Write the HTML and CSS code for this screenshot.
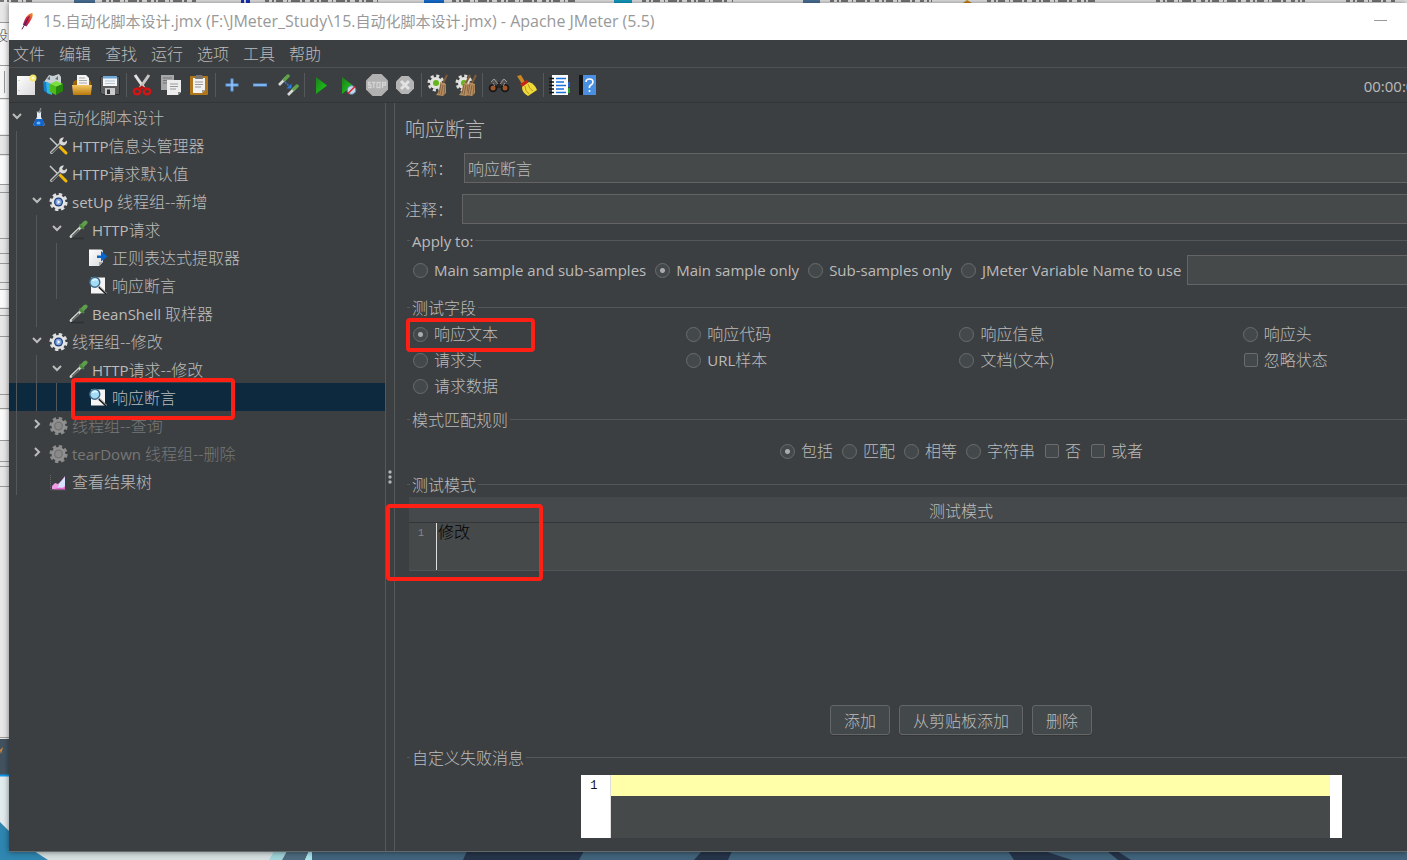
FILE: index.html
```html
<!DOCTYPE html>
<html lang="zh-CN">
<head>
<meta charset="utf-8">
<title>15.自动化脚本设计.jmx - Apache JMeter (5.5)</title>
<link rel="stylesheet" href="styles.css">
</head>
<body>
<svg class="defs" aria-hidden="true">
  <defs>
    <linearGradient id="gold" x1="0" y1="0" x2="0" y2="1"><stop offset="0" stop-color="#f3c864"/><stop offset="1" stop-color="#b9780c"/></linearGradient>
    <linearGradient id="green" x1="0" y1="0" x2="1" y2="1"><stop offset="0" stop-color="#1f7d1c"/><stop offset="1" stop-color="#18d416"/></linearGradient>
    <linearGradient id="paper" x1="0" y1="0" x2="1" y2="1"><stop offset="0" stop-color="#ffffff"/><stop offset="1" stop-color="#d9d9d9"/></linearGradient>
    <linearGradient id="quill" x1="0" y1="1" x2="1" y2="0"><stop offset="0" stop-color="#6b2a7a"/><stop offset=".5" stop-color="#d5223c"/><stop offset="1" stop-color="#f5a623"/></linearGradient>
  </defs>
  <symbol id="chev-down" viewBox="0 0 12 12"><path d="M2 4l4 4 4-4" fill="none" stroke="#bbb" stroke-width="2"/></symbol>
  <symbol id="chev-right" viewBox="0 0 12 12"><path d="M4 2l4 4-4 4" fill="none" stroke="#bbb" stroke-width="2"/></symbol>
  <symbol id="flask" viewBox="0 0 20 20"><path d="M8 4v5L4.500 16q0 2 1.500 2h8q1.500 0 1.500-2L12 9V4z" fill="#e4ecf4"/><path d="M6.500 11h7l2 5q0 2-1.500 2H6q-1.500 0-1.500-2z" fill="#1264c8"/><path d="M10 5l2-5" stroke="#8a9199" stroke-width="1.200"/><ellipse cx="9.500" cy="15" rx="2" ry="1.500" fill="#6fb4f5"/><path d="M7.500 4h5" stroke="#9aa5b0"/></symbol>
  <symbol id="tools" viewBox="0 0 20 20"><path d="M1 2l9 9" stroke="#c9c9c9" stroke-width="1.500"/><path d="M11 11l6 6" stroke="#f2b705" stroke-width="3" stroke-linecap="round"/><path d="M12 7L2.500 16.500" stroke="#c4c4c4" stroke-width="3" stroke-linecap="round"/><path d="M12 8L2.500 17" stroke="#4c4e4e" stroke-width="1.200"/><path d="M15 1.500a4 4 0 1 0 3 3l-3 2-2-1.500z" fill="#dadada"/></symbol>
  <symbol id="gear" viewBox="0 0 20 20"><circle cx="9.500" cy="10" r="7.600" fill="none" stroke="#dedede" stroke-width="3" stroke-dasharray="3.400 2.569"/><circle cx="9.500" cy="10" r="7" fill="#e4e4e4"/><circle cx="9.500" cy="10" r="4.500" fill="#1d3f7c"/><circle cx="9.500" cy="10" r="3.200" fill="#7da0d6"/><path d="M8.500 8l3 2-3 2z" fill="#f4f8ff"/></symbol>
  <symbol id="gear-off" viewBox="0 0 20 20"><circle cx="9.500" cy="10" r="7.600" fill="none" stroke="#8c8c8c" stroke-width="3" stroke-dasharray="3.400 2.569"/><circle cx="9.500" cy="10" r="7" fill="#909090"/><circle cx="9.500" cy="10" r="4.500" fill="#737373"/><circle cx="9.500" cy="10" r="3.200" fill="#898989"/></symbol>
  <symbol id="dropper" viewBox="0 0 20 20"><path d="M2 18.500h13" stroke="#2e3132" stroke-width="1.500"/><path d="M12 7L2 16.500" stroke="#d5d9d5" stroke-width="2.800" stroke-linecap="round"/><path d="M10 9.500L3 16.500" stroke="#585d58" stroke-width="1.200"/><path d="M12.500 6.500l4-4" stroke="#5e9f4b" stroke-width="4" stroke-linecap="round"/><path d="M10.500 4.500l4.500 4.500" stroke="#4f873e" stroke-width="2"/></symbol>
  <symbol id="extract" viewBox="0 0 20 20"><path d="M0 1.500h12q2 0 2 2V14l-4 4H0z" fill="url(#paper)"/><path d="M10 18v-4h4" fill="#aaa"/><path d="M8 7.500h4V3l6.500 5.500-6.500 5V10H8z" fill="#0b66cc"/></symbol>
  <symbol id="lens" viewBox="0 0 20 20"><path d="M2 1.500h14v16H2z" fill="#f4f4f4"/><path d="M10 11l7.500 7" stroke="#1b1b1b" stroke-width="2.200"/><path d="M11 11l7 6.500" stroke="#ccc" stroke-width=".8"/><circle cx="5.800" cy="6.200" r="5" fill="#a5dcf5" stroke="#3e6987" stroke-width="1.400"/><path d="M3.500 5q2-2.500 5-1" stroke="#e8f8ff" fill="none" stroke-width="1.500"/></symbol>
  <symbol id="graph" viewBox="0 0 20 20"><path d="M1.500 3v15H17" stroke="#666" stroke-dasharray="1 1" fill="none"/><path d="M3 17v-3l3-3 3 1 3-3 4-5v13z" fill="#f29be6"/><path d="M9 16l1-4 6-7v9l-4 2z" fill="#d5e5ff"/><path d="M3 17.500h13v-3l-2 2-3-1-4 1z" fill="#e766d0"/></symbol>
  <symbol id="broom" viewBox="0 0 22 22"><path d="M20 1l-4 8" stroke="#7f5c37" stroke-width="2"/><path d="M13 8l6 2v9l-3 3-7-1q4-4 4-13z" fill="#b78e60"/><path d="M14 10l-2 10M16 11l-2 10M18 11l-1 10" stroke="#80603e" stroke-width=".9"/></symbol>
  <symbol id="gearmini" viewBox="0 0 22 22"><circle cx="9" cy="9" r="7" fill="none" stroke="#ddd" stroke-width="3" stroke-dasharray="3 2.500"/><circle cx="9" cy="9" r="6" fill="#e4e4df"/><circle cx="9" cy="9" r="3" fill="#62b51c"/></symbol>
</svg>

<svg class="desktop" viewBox="0 0 1407 860" preserveAspectRatio="none" aria-hidden="true">
  <rect width="1407" height="860" fill="#e8e8e8"/>
  <path d="M74 0h21v3H74zM803 0h17v3h-17z" fill="#4d759c"/>
  <path d="M241 0h3v3h-3zM246 0h4v3h-4z" fill="#1b35c6"/>
  <path d="M424 0h20v3h-20z" fill="#1573d8"/><path d="M614 0h18v3h-18z" fill="#14a0c8"/><path d="M963 3l4-3 5 3z" fill="#d68a16"/>
  <path d="M0 1h32M102 1h94M265 1h114M452 1h123M642 1h91M830 1h102M987 1h110M1156 1h149M1346 1h51" stroke="#777" stroke-width="2" stroke-dasharray="4 3 2 2 7 4 1 3 9 2 3 5"/>
  <path d="M0 22h9v76H0z" fill="#f7f7f7"/>
  <path d="M0 22.500h9M0 65.500h9M0 98.500h9M0 135.500h9M0 154.500h9M0 184.500h9M0 192.500h9M0 238.500h9M0 253.500h9M0 263.500h9M0 282.500h9M0 289.500h9M0 308.500h9M0 315.500h9M0 336.500h9M0 394.500h9M0 408.500h9M0 440.500h9M0 461.500h9M0 466.500h9M0 486.500h9M0 737.500h9" stroke="#9a9a9a"/>
  <path d="M0 100h9v34H0zM0 156h9v28H0zM0 290h9v17H0zM0 410h9v30H0z" fill="#fbfbfb"/>
  <path d="M4.500 71v22" stroke="#999"/>
  <path d="M0 739h9v37H0z" fill="#43525f"/><path d="M0 750l3-3-2 7z" fill="#e38a2b"/><path d="M0 775.500h9" stroke="#0d99ef" stroke-width="2"/>
  <path d="M0 777h9v83H0z" fill="#e2ecef"/><path d="M0 822l9 9 40 29H0z" fill="#2f86b0"/>
  <path d="M48 860l-14-9h240l-5 9z" fill="#d5dfe0"/><path d="M269 860l5-9h13l-5 9z" fill="#a0d5da"/><path d="M282 860l5-9h22l-4 9z" fill="#4d6b7e"/>
  <path d="M305 860l4-9h5l-2 9z" fill="#a9e4ea"/><path d="M312 851h1095v9H312z" fill="#41647c"/>
  <path d="M467 851h117l-5 9H463zM702 851h30l-4 9h-34zM1008 851h36l28 9h-58zM1107 851h10l14 9h-13z" fill="#263449"/>
</svg>
<span class="desktop-word" aria-hidden="true">设</span>

<div class="window">
  <header class="titlebar">
    <svg class="feather" viewBox="0 0 14 20"><path d="M2 14Q5 3 12 1q2 3-2 9l-4 6z" fill="url(#quill)"/><path d="M1 19L9 5" stroke="#4a1750" stroke-width="1"/></svg>
    <h1 class="title"><em>15.</em>自动化脚本设计<em>.jmx (F:\JMeter_Study\15.</em>自动化脚本设计<em>.jmx) - Apache JMeter (5.5)</em></h1>
    <button class="minimize" aria-label="最小化"></button>
  </header>

  <nav class="menubar">
    <button>文件</button><button>编辑</button><button>查找</button><button>运行</button><button>选项</button><button>工具</button><button>帮助</button>
  </nav>

  <div class="toolbar">
    <button aria-label="新建"><svg viewBox="0 0 22 22"><path d="M2 2h18v19H2z" fill="url(#paper)"/><path d="M4 6v1M4 16v1" stroke="#aaa" stroke-width="1"/><circle cx="18" cy="4" r="3.500" fill="#f6e46c"/><circle cx="18" cy="4" r="1.500" fill="#fffbd0"/></svg></button>
    <button aria-label="模板"><svg viewBox="0 0 22 22"><path d="M1 8l5-7 4 1 6-2 2 3v7H1z" fill="#c9d0d4"/><path d="M4 5l3-3v4zM12 5l3-3v4z" fill="#5f7380"/><path d="M0 7l6 2v11l-5-3z" fill="#1580c8"/><path d="M3 8l6 2v11l-5-2z" fill="#33b3df"/><path d="M7 10l6-3 7 3-7 3z" fill="#7be03e"/><path d="M7 10l6 3v8l-6-3z" fill="#4dbb18"/><path d="M13 13l7-3v7l-7 4z" fill="#24860d"/></svg></button>
    <button aria-label="打开"><svg viewBox="0 0 22 22"><path d="M2 8l3-2h14l1 3v12H3z" fill="#9c6206"/><path d="M6 1h9l3 3v8H6z" fill="#f4f4f4"/><path d="M8 4h6M8 6.500h8M8 9h8" stroke="#aaa"/><path d="M1 11h20l-1 9q0 1-1 1H3q-1 0-1-1z" fill="url(#gold)"/></svg></button>
    <button aria-label="保存"><svg viewBox="0 0 22 22"><path d="M1.500 2.500h19v18h-17l-2-2z" fill="#5b5d5f" stroke="#2b2c2d"/><path d="M4 2h14v10H4z" fill="#f3f6f8"/><path d="M4 2h14v2.500H4z" fill="#6fa9d8"/><path d="M6 7h10M6 9.500h10" stroke="#b9c4cc"/><path d="M6 14h10v7H6z" fill="#c9cbcd"/><path d="M8 15.500h3V20H8z" fill="#333"/></svg></button>
    <i class="sep"></i>
    <button aria-label="剪切"><svg viewBox="0 0 22 22"><path d="M3 1l9 13" stroke="#e2e2e2" stroke-width="3"/><path d="M17 1L8 14" stroke="#c4c4c4" stroke-width="3"/><ellipse cx="5" cy="17.500" rx="3.200" ry="2.800" fill="none" stroke="#d31414" stroke-width="2.400"/><ellipse cx="15" cy="17.500" rx="3.200" ry="2.800" fill="none" stroke="#d31414" stroke-width="2.400"/><path d="M7 15l3-2 3 2" stroke="#b80f0f" stroke-width="2.500" fill="none"/></svg></button>
    <button aria-label="复制"><svg viewBox="0 0 22 22"><path d="M1 1h13v15H1z" fill="#a5a7a8"/><path d="M3 4h9M3 6.500h9M3 9h5" stroke="#777"/><path d="M7 6h14v12l-3 3H7z" fill="#ededed"/><path d="M10 10h8M10 12.500h8M10 15h6" stroke="#999"/><path d="M18 21v-3h3" fill="#888"/></svg></button>
    <button aria-label="粘贴"><svg viewBox="0 0 22 22"><rect x="2" y="2" width="18" height="19" rx="1" fill="#b1761a"/><path d="M5 4h12v12l-3 3H5z" fill="#f1f1f1"/><path d="M8 1h6l1 4H7z" fill="#777"/><path d="M7 8h8M7 10.500h8M7 13h6" stroke="#999"/><path d="M14 19v-3h3" fill="#999"/></svg></button>
    <i class="sep"></i>
    <button aria-label="展开"><svg viewBox="0 0 22 22"><path d="M11 4.500v13M4.500 11h13" stroke="#5a9be6" stroke-width="3"/><path d="M11 5.500v11M5.500 11h11" stroke="#a7cbf5" stroke-width="1"/></svg></button>
    <button aria-label="折叠"><svg viewBox="0 0 22 22"><path d="M4 11h14" stroke="#5a9be6" stroke-width="3"/><path d="M5 11h12" stroke="#a7cbf5" stroke-width="1"/></svg></button>
    <button aria-label="切换"><svg viewBox="0 0 22 22"><path d="M9 4l-7 7" stroke="#d6d9d6" stroke-width="2.600"/><path d="M7.500 5.500L11 2" stroke="#5fa34b" stroke-width="3.500" stroke-linecap="round"/><path d="M18 14l-7 7" stroke="#d6d9d6" stroke-width="2.600"/><path d="M17 15L20 12" stroke="#5fa34b" stroke-width="3.500" stroke-linecap="round"/><path d="M8 8l5 5" stroke="#2b7be0" stroke-width="1.500" stroke-dasharray="2 1"/><path d="M14.500 9.500v5h-5z" fill="#2b7be0"/></svg></button>
    <i class="sep"></i>
    <button aria-label="启动"><svg viewBox="0 0 22 22"><path d="M6 3l11 8.500-11 8.500z" fill="url(#green)"/></svg></button>
    <button aria-label="不停顿开始"><svg viewBox="0 0 22 22"><path d="M4 3l11 8.500-11 8.500z" fill="url(#green)"/><circle cx="13.500" cy="16" r="4.300" fill="#c3d8ec" stroke="#5f87ad"/><path d="M10 19.500l7-7" stroke="#d22" stroke-width="1.500"/></svg></button>
    <button aria-label="停止" disabled><svg viewBox="0 0 22 22"><path d="M6.500 0h9L22 6.500v9L15.500 22h-9L0 15.500v-9z" fill="#b1b1b1"/><path d="M5 8.500H2.500V11H5v2.500H2M6 8.500h3.500M7.800 8.500v5.500M11 8.500h3v5h-3zM16.500 14V8.500h3V11h-3" fill="none" stroke="#d4d4d4" stroke-width="1.300"/></svg></button>
    <button aria-label="关闭" disabled><svg viewBox="0 0 22 22"><path d="M7.500 2h7l5.500 5.500v7L14.500 20h-7L2 14.500v-7z" fill="#b4b4b4"/><path d="M7 7l8 8M15 7l-8 8" stroke="#e2e2e2" stroke-width="3"/></svg></button>
    <i class="sep"></i>
    <button aria-label="清除"><svg viewBox="0 0 22 22"><use href="#gearmini"/><use href="#broom"/></svg></button>
    <button aria-label="清除全部"><svg viewBox="0 0 22 22"><use href="#gearmini"/><use href="#broom" x="-5"/><use href="#broom" x="1"/></svg></button>
    <i class="sep"></i>
    <button aria-label="查找"><svg viewBox="0 0 22 22"><path d="M4 6q2-3 5 0l1 5H2zM18 6q-2-3-5 0l-1 5h8z" fill="#515151"/><path d="M9 8h4v6H9z" fill="#262626"/><circle cx="5" cy="14" r="4.300" fill="#171717"/><circle cx="17" cy="14" r="4.300" fill="#171717"/><circle cx="5" cy="14" r="2.500" fill="#a1572c"/><circle cx="17" cy="14" r="2.500" fill="#a1572c"/><path d="M3 8l3-3 4 5M19 8l-3-3-4 5M5 9l2 3M17 9l-2 3" stroke="#999" fill="none"/></svg></button>
    <button aria-label="重置查找"><svg viewBox="0 0 22 22"><path d="M1 2l4-1 4 7-3 2z" fill="#c98622"/><path d="M4 10l7-4 2 3-7 4z" fill="#c3231b"/><path d="M6 13l7-5q6 2 8 8l-9 6q-6-3-6-9z" fill="#f0d83a"/><path d="M9 12q0 5 4 8M12 10q1 5 5 7" stroke="#b79a14" fill="none"/></svg></button>
    <i class="sep"></i>
    <button aria-label="函数助手"><svg viewBox="0 0 22 22"><path d="M3 1h16v20H3z" fill="#fff"/><path d="M19 8h2v5h-2z" fill="#1f62c9"/><path d="M19 14h2v5h-2z" fill="#27a52a"/><path d="M7 4.500h10M7 8h8M7 11.500h10M7 15h8M7 18.500h10" stroke="#1a6fd8" stroke-width="1.300"/><path d="M0 4.500h5M0 8h5M0 11.500h5M0 15h5M0 18.500h5" stroke="#111" stroke-width="1.500"/></svg></button>
    <button aria-label="帮助"><svg viewBox="0 0 22 22"><path d="M2 1h17v20H2z" fill="#4a8fe2"/><path d="M2 1h4v20H2z" fill="#151515"/><path d="M9 8q0-3 3.500-3T16 8q0 2-2 3t-1.500 3M12.500 16v2" fill="none" stroke="#fff" stroke-width="1.600"/></svg></button>
    <span class="timer">00:00:00</span>
  </div>

  <div class="body">
    <aside class="tree">
      <ul>
        <li><svg class="arrow"><use href="#chev-down"/></svg><svg class="node"><use href="#flask"/></svg><span>自动化脚本设计</span></li>
        <li><i></i><b></b><svg class="node"><use href="#tools"/></svg><span><em>HTTP</em>信息头管理器</span></li>
        <li><i></i><b></b><svg class="node"><use href="#tools"/></svg><span><em>HTTP</em>请求默认值</span></li>
        <li><i></i><svg class="arrow"><use href="#chev-down"/></svg><svg class="node"><use href="#gear"/></svg><span><em>setUp </em>线程组--新增</span></li>
        <li><i></i><i></i><svg class="arrow"><use href="#chev-down"/></svg><svg class="node"><use href="#dropper"/></svg><span><em>HTTP</em>请求</span></li>
        <li><i></i><i></i><i></i><b></b><svg class="node"><use href="#extract"/></svg><span>正则表达式提取器</span></li>
        <li><i></i><i></i><i></i><b></b><svg class="node"><use href="#lens"/></svg><span>响应断言</span></li>
        <li><i></i><i></i><b></b><svg class="node"><use href="#dropper"/></svg><span><em>BeanShell </em>取样器</span></li>
        <li><i></i><svg class="arrow"><use href="#chev-down"/></svg><svg class="node"><use href="#gear"/></svg><span>线程组--修改</span></li>
        <li><i></i><i></i><svg class="arrow"><use href="#chev-down"/></svg><svg class="node"><use href="#dropper"/></svg><span><em>HTTP</em>请求--修改</span></li>
        <li class="selected"><i></i><i></i><i></i><b></b><svg class="node"><use href="#lens"/></svg><span>响应断言</span></li>
        <li class="off"><i></i><svg class="arrow"><use href="#chev-right"/></svg><svg class="node"><use href="#gear-off"/></svg><span>线程组--查询</span></li>
        <li class="off"><i></i><svg class="arrow"><use href="#chev-right"/></svg><svg class="node"><use href="#gear-off"/></svg><span><em>tearDown </em>线程组--删除</span></li>
        <li><i></i><b></b><svg class="node"><use href="#graph"/></svg><span>查看结果树</span></li>
      </ul>
    </aside>
    <div class="splitter"><svg viewBox="0 0 4 14"><circle cx="2" cy="2" r="1.700"/><circle cx="2" cy="7" r="1.700"/><circle cx="2" cy="12" r="1.700"/></svg></div>

    <main class="viewport">
      <form class="panel">
        <h2>响应断言</h2>
        <div class="row name"><label for="name">名称：</label><input type="text" id="name" value="响应断言"></div>
        <div class="row comment"><label for="comment">注释：</label><input type="text" id="comment"></div>

        <fieldset>
          <legend class="latin">Apply to:</legend>
          <div class="options latin">
            <label><input type="radio" name="scope">Main sample and sub-samples</label>
            <label><input type="radio" name="scope" checked>Main sample only</label>
            <label><input type="radio" name="scope">Sub-samples only</label>
            <label><input type="radio" name="scope">JMeter Variable Name to use</label>
            <input type="text" class="variable" aria-label="JMeter Variable Name">
          </div>
        </fieldset>

        <fieldset>
          <legend>测试字段</legend>
          <div class="fields">
            <label><input type="radio" name="field" checked>响应文本</label>
            <label><input type="radio" name="field">响应代码</label>
            <label><input type="radio" name="field">响应信息</label>
            <label><input type="radio" name="field">响应头</label>
            <label><input type="radio" name="field">请求头</label>
            <label><input type="radio" name="field"><span><em>URL</em>样本</span></label>
            <label><input type="radio" name="field">文档(文本)</label>
            <label><input type="checkbox">忽略状态</label>
            <label><input type="radio" name="field">请求数据</label>
          </div>
        </fieldset>

        <fieldset>
          <legend>模式匹配规则</legend>
          <div class="options rules">
            <label><input type="radio" name="rule" checked>包括</label>
            <label><input type="radio" name="rule">匹配</label>
            <label><input type="radio" name="rule">相等</label>
            <label><input type="radio" name="rule">字符串</label>
            <label><input type="checkbox">否</label>
            <label><input type="checkbox">或者</label>
          </div>
        </fieldset>

        <fieldset class="patterns">
          <legend>测试模式</legend>
          <table>
            <thead><tr><th>测试模式</th></tr></thead>
            <tbody><tr><td><div class="cell"><span class="line">1</span><textarea aria-label="测试模式">修改</textarea></div></td></tr></tbody>
          </table>
          <div class="actions">
            <button type="button">添加</button><button type="button">从剪贴板添加</button><button type="button">删除</button>
          </div>
        </fieldset>

        <fieldset>
          <legend>自定义失败消息</legend>
          <div class="message"><span class="line">1</span><textarea aria-label="自定义失败消息"></textarea></div>
        </fieldset>
      </form>
    </main>
  </div>
</div>

<div class="mark mark-node"></div>
<div class="mark mark-field"></div>
<div class="mark mark-pattern"></div>
</body>
</html>
```

FILE: styles.css
```css
* { box-sizing: border-box; }

:root {
  --bg: #3c3f41;
  --field: #45494a;
  --edge: #646464;
  --rule: #55585a;
  --text: #bbbbbb;
  --ui: "Open Sans", "Noto Sans CJK SC", sans-serif;
  --cjk: "Noto Sans CJK SC", sans-serif;
}

body {
  margin: 0;
  height: 100vh;
  padding: 3px 0 8px 9px;
  overflow: hidden;
  position: relative;
  font: 300 16px/22px var(--cjk);
  color: var(--text);
}

button, input, textarea { font: inherit; color: inherit; }
button { background: none; border: 0; padding: 0; }
em, .latin { font-family: var(--ui); font-size: 15px; font-style: normal; font-weight: 400; }
em { white-space: pre; }

.defs { position: absolute; width: 0; height: 0; }
.desktop { position: absolute; inset: 0; width: 100%; height: 100%; }
.desktop-word { position: absolute; left: -5px; top: 26px; font-size: 13px; line-height: 18px; color: #333; }

.window {
  position: relative;
  height: 100%;
  display: flex;
  flex-direction: column;
  background: var(--bg);
  border-bottom: 1px solid #63686a;
  box-shadow: 0 0 6px rgba(0, 0, 0, .5);
  overflow: hidden;
}

.titlebar { display: flex; align-items: center; height: 37px; padding: 0 20px 2px 12px; background: #fff; flex: none; }
.feather { width: 13px; height: 20px; }
.title { margin: 0 auto 0 9px; font: 400 15px/22px var(--ui); color: #999; white-space: nowrap; }
.title em { font-size: 16px; }
.minimize { width: 13px; height: 20px; background: linear-gradient(#999, #999) center / 13px 1px no-repeat; }

.menubar { display: flex; gap: 14px; align-items: center; height: 28px; padding: 0 4px 2px; border-bottom: 1px solid #515151; flex: none; }

.toolbar { display: flex; align-items: center; height: 35px; padding-left: 3px; border-bottom: 1px solid #323435; flex: none; }
.toolbar button { width: 28px; height: 28px; display: grid; place-items: center; flex: none; }
.toolbar svg { width: 22px; height: 22px; }
.sep { width: 5px; height: 24px; background: linear-gradient(#56595b, #56595b) center / 1px 100% no-repeat; flex: none; }
.timer { margin: 2px -16px 0 auto; font: 400 15px/22px var(--ui); }

.body { display: flex; flex: 1; min-height: 0; }

.tree { width: 377px; flex: none; border-right: 1px solid #55585a; }
.tree ul { list-style: none; margin: 0; padding: 0; }
.tree li { display: flex; align-items: center; height: 28px; white-space: nowrap; }
.tree i, .tree b { width: 20px; align-self: stretch; flex: none; }
.tree i { background: linear-gradient(#55585a, #55585a) 7px 0 / 1px 100% no-repeat; }
.tree .arrow { width: 12px; height: 12px; margin: 0 6px 2px 2px; flex: none; }
.tree .node { width: 20px; height: 20px; margin: 2px 3px 0 0; flex: none; }
.tree .selected { background-color: #0d293e; }
.tree .off span { color: #777; }

.splitter { width: 9px; flex: none; display: grid; place-items: center; border-right: 1px solid #55585a; }
.splitter svg { width: 4px; height: 14px; fill: #b4b4b4; }

.viewport { flex: 1; min-width: 0; overflow: hidden; }
/* The form is wider than its viewport and runs on past the right edge. */
.panel { display: flex; flex-direction: column; height: 100%; margin-right: -114px; padding: 12px 8px 13px 10px; }
.panel h2 { margin: 0 0 10px; font: 300 20px/28px var(--cjk); }

.row { display: flex; align-items: center; margin-bottom: 11px; }
.row label { width: 59px; flex: none; }
.row.comment { margin-bottom: 5px; }
.row.comment label { width: 57px; }
input[type="text"] { flex: 1; min-width: 0; height: 30px; padding: 0 3px; background: var(--field); border: 1px solid var(--edge); border-radius: 0; outline: 0; }

fieldset { min-width: 0; margin: 0 0 0 2px; padding: 0 0 0 3px; border: 0 solid var(--rule); border-top-width: 1px; }
legend { height: 22px; padding: 0 2px; line-height: 22px; }
legend.latin { line-height: 24px; }

label { display: flex; align-items: center; white-space: nowrap; }
input[type="radio"], input[type="checkbox"] { appearance: none; flex: none; width: 15px; height: 15px; margin: 0 6px 0 0; border: 1px solid #6b6b6b; background: #43494a; }
input[type="radio"] { border-radius: 50%; }
input[type="radio"]:checked { background: radial-gradient(circle, #ababab 2px, #43494a 3px); }
input[type="checkbox"] { width: 14px; height: 14px; border-radius: 2px; margin-left: 1px; }

.options { display: flex; align-items: center; height: 30px; gap: 9px; margin: 4px 0 11px 3px; }
.options .variable { margin-left: -3px; }
.fields { display: grid; grid-template-columns: 273fr 273fr 283fr 270fr; grid-auto-rows: 26px; margin: 2px 0 10px 3px; }
.fields input, .rules input { margin-top: 2px !important; }
.rules { justify-content: center; margin: 5px 0 8px; }

.patterns { flex: 1; display: flex; flex-direction: column; padding-left: 2px; }
.patterns legend { margin-left: 1px; }
table { width: 100%; margin-top: 2px; border-collapse: collapse; }
th { height: 25px; padding: 1px 0 0; font-weight: 300; line-height: 22px; background: #45494b; border-bottom: 1px solid #333537; }
td { padding: 0; background: var(--field); border-bottom: 1px solid #515456; }
.cell { display: flex; height: 47px; }
.line { font: 10px/22px "Liberation Mono", monospace; text-align: center; flex: none; }
.cell .line { width: 27px; padding-right: 3px; color: #888; }
textarea { flex: 1; display: block; resize: none; outline: 0; border: 0; margin: 0; }
.cell textarea { padding: 0 1px; line-height: 16px; color: #000; background: none; border-left: 1px solid #ddd; }

.actions { display: flex; justify-content: center; gap: 9px; margin: auto 0 11px; }
.actions button { height: 30px; padding: 0 13px; line-height: 24px; background: #43484a; border: 1px solid #646768; border-radius: 3px; box-shadow: 0 1px 1px #343638; }

.message { display: flex; width: 69%; height: 63px; margin: 7px auto 0; background: var(--field); border-right: 12px solid #fff; }
.message .line { width: 30px; padding-right: 3px; font-size: 12px; color: #111; background: #fff; border-right: 1px solid #ddd; }
.message textarea { background: linear-gradient(#ffffaa, #ffffaa) 0 0 / 100% 21px no-repeat; }

.mark { position: absolute; border: 4px solid #ff2015; border-radius: 4px; pointer-events: none; }
.mark-node { left: 71px; top: 378px; width: 164px; height: 42px; }
.mark-field { left: 406px; top: 318px; width: 129px; height: 34px; }
.mark-pattern { left: 386px; top: 504px; width: 157px; height: 77px; }
```
